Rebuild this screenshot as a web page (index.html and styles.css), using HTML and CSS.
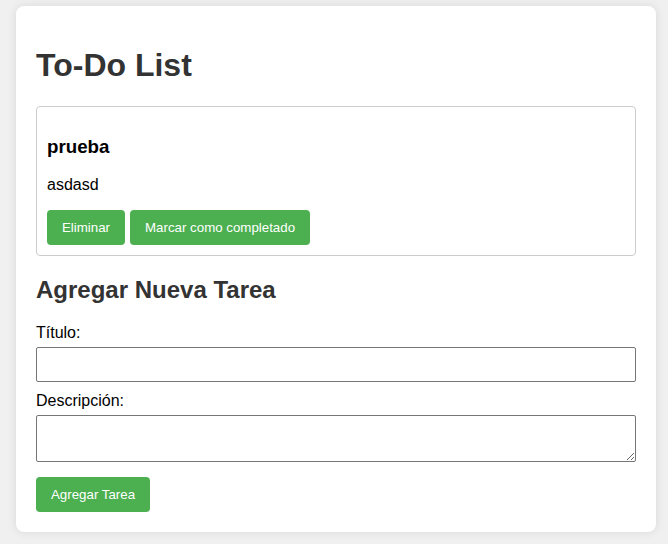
FILE: index.html
```html
<!DOCTYPE html>
<html lang="es">
<head>
<meta charset="utf-8">
<title>To-Do List</title>
<link rel="stylesheet" href="styles.css">
</head>
<body>
<div class="container">
  <h1 class="title">To-Do List</h1>
  <div class="task">
    <h3 class="task-title">prueba</h3>
    <p class="task-desc">asdasd</p>
    <div class="task-actions">
      <button class="btn">Eliminar</button>
      <button class="btn">Marcar como completado</button>
    </div>
  </div>
  <h2 class="subtitle">Agregar Nueva Tarea</h2>
  <form class="task-form">
    <label class="field-label" for="titulo">Título:</label>
    <input class="field-input" id="titulo" type="text">
    <label class="field-label" for="desc">Descripción:</label>
    <textarea class="field-area" id="desc"></textarea>
    <button class="btn" type="button">Agregar Tarea</button>
  </form>
</div>
</body>
</html>
```

FILE: styles.css
```css
html, body {
  margin: 0;
}
body {
  background: #f0f0f0;
  font-family: "Liberation Sans", Arial, sans-serif;
  color: #000;
  padding: 6px 12px 12px 16px;
}
.container {
  width: 600px;
  padding: 20px;
  background: #fff;
  border-radius: 8px;
  box-shadow: 0 0 10px rgba(0, 0, 0, 0.1);
}
.title {
  font-size: 32px;
  color: #333;
  margin: 21.44px 0;
}
.task {
  border: 1px solid #ccc;
  border-radius: 4px;
  padding: 10px;
  margin-bottom: 10px;
}
.task-title {
  font-size: 18.72px;
  margin: 18.72px 0;
}
.task-desc {
  font-size: 16px;
  margin: 16px 0;
}
.task-actions {
  display: flex;
  gap: 5px;
}
.btn {
  background: #4caf50;
  color: #fff;
  border: none;
  border-radius: 4px;
  padding: 10px 15px;
  font-family: "Liberation Sans", Arial, sans-serif;
  font-size: 13.3px;
  line-height: 15px;
  cursor: pointer;
}
.subtitle {
  font-size: 24px;
  color: #333;
  margin: 19.92px 0;
}
.task-form {
  display: flex;
  flex-direction: column;
  align-items: flex-start;
}
.field-label {
  font-size: 16px;
  margin-bottom: 5px;
}
.field-input {
  box-sizing: border-box;
  width: 100%;
  height: 35px;
  padding: 8px;
  border: 1px solid #767676;
  border-radius: 2px;
  margin: 0 0 10px;
  font-size: 13.333px;
}
.field-area {
  box-sizing: border-box;
  width: 100%;
  height: 47px;
  padding: 8px;
  border: 1px solid #767676;
  border-radius: 2px;
  margin: 0 0 15px;
  font-size: 13.333px;
}
```
